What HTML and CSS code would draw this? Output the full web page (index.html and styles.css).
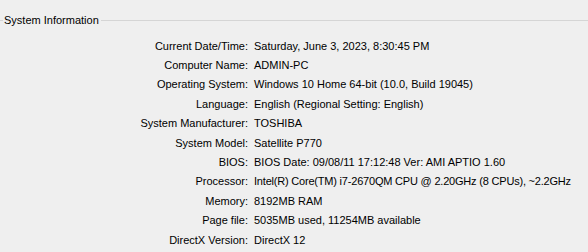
FILE: index.html
```html
<!DOCTYPE html>
<html lang="en">
<head>
<meta charset="utf-8">
<title>System Information</title>
<link rel="stylesheet" href="styles.css">
</head>
<body>
<section class="group">
  <div class="group-title">
    <span class="rule rule-left"></span>
    <span class="title-text">System Information</span>
    <span class="rule rule-right"></span>
  </div>
  <dl class="info">
    <dt>Current Date/Time:</dt><dd>Saturday, June 3, 2023, 8:30:45 PM</dd>
    <dt>Computer Name:</dt><dd>ADMIN-PC</dd>
    <dt>Operating System:</dt><dd>Windows 10 Home 64-bit (10.0, Build 19045)</dd>
    <dt>Language:</dt><dd>English (Regional Setting: English)</dd>
    <dt>System Manufacturer:</dt><dd>TOSHIBA</dd>
    <dt>System Model:</dt><dd>Satellite P770</dd>
    <dt>BIOS:</dt><dd>BIOS Date: 09/08/11 17:12:48 Ver: AMI APTIO 1.60</dd>
    <dt>Processor:</dt><dd class="tight">Intel(R) Core(TM) i7-2670QM CPU @ 2.20GHz (8 CPUs), ~2.2GHz</dd>
    <dt>Memory:</dt><dd>8192MB RAM</dd>
    <dt>Page file:</dt><dd>5035MB used, 11254MB available</dd>
    <dt>DirectX Version:</dt><dd>DirectX 12</dd>
  </dl>
</section>
</body>
</html>
```
FILE: styles.css
```css
html, body {
  margin: 0;
  padding: 0;
  background: #efefef;
}

body {
  width: 588px;
  height: 252px;
  overflow: hidden;
  font-family: "Liberation Sans", Arial, sans-serif;
  font-size: 11px;
  color: #000;
}

.group-title {
  display: flex;
  align-items: center;
  height: 20px;
  padding-top: 10px;
}

.rule {
  height: 1px;
  background: #d5d5d5;
}

.rule-left {
  width: 3px;
}

.rule-right {
  flex: 1;
}

.title-text {
  padding: 0 2px 0 1px;
  line-height: 20px;
}

.info {
  display: grid;
  grid-template-columns: 254px 1fr;
  grid-auto-rows: 19.4px;
  align-items: center;
  margin: 6px 0 0 0;
}

.info dt {
  text-align: right;
  padding-right: 6px;
}

.info dd {
  margin: 0;
  white-space: nowrap;
}

.info .tight {
  letter-spacing: -0.2px;
}
```
